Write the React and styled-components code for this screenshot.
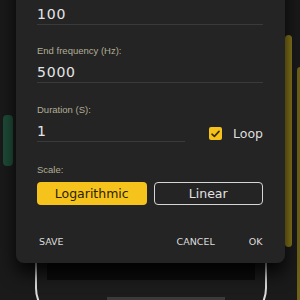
import React from 'react';
import styled, { createGlobalStyle } from 'styled-components';

const GlobalStyle = createGlobalStyle`
  html, body {
    margin: 0;
    padding: 0;
    background: #1a1a1a;
  }
`;

const Stage = styled.div`
  position: relative;
  width: 300px;
  height: 300px;
  overflow: hidden;
  background: #1a1a1a;
`;

const Bar = styled.div`
  position: absolute;
  left: ${p => p.x}px;
  top: ${p => p.y}px;
  width: ${p => p.w}px;
  height: ${p => p.h}px;
  background: ${p => p.color};
  border-radius: 4px;
`;

const Device = styled.div`
  position: absolute;
  left: 35px;
  top: 190px;
  width: 228px;
  height: 128px;
  border: 2px solid #dcdcdc;
  border-radius: 34px;
  background: #1c1c1c;
`;

const DeviceScreen = styled.div`
  position: absolute;
  left: 10px;
  right: 10px;
  top: 0;
  height: 88px;
  background: #0c0c0c;
`;

const DeviceStrip = styled.div`
  position: absolute;
  left: 70px;
  right: 40px;
  bottom: 20px;
  height: 3px;
  background: #3a3a3a;
`;

const Dialog = styled.div`
  position: absolute;
  left: 16px;
  top: -33px;
  width: 269px;
  box-sizing: border-box;
  padding: 38px 22px 15px 21px;
  background: #242424;
  border-radius: 8px;
  box-shadow: 0 10px 18px rgba(0, 0, 0, 0.85);
  display: flex;
  flex-direction: column;
`;

const Field = styled.div`
  display: flex;
  flex-direction: column;
  margin-top: ${p => p.gap || 0}px;
  width: ${p => (p.w ? `${p.w}px` : 'auto')};
`;

const Label = styled.div`
  font-family: "Liberation Sans", Arial, sans-serif;
  font-size: 9.5px;
  line-height: 12px;
  color: #b2ae96;
  margin-bottom: ${p => p.mb ?? 6}px;
  margin-top: ${p => p.mt || 0}px;
`;

const Value = styled.div`
  font-family: "DejaVu Sans", sans-serif;
  font-size: 14px;
  line-height: 18px;
  letter-spacing: 0.8px;
  color: #e6e6e6;
  padding-bottom: 1px;
  border-bottom: 1px solid #3a3a3a;
`;

const Row = styled.div`
  display: flex;
  align-items: flex-end;
  margin-top: ${p => p.gap || 0}px;
`;

const LoopToggle = styled.label`
  display: flex;
  align-items: center;
  gap: 11px;
  margin-left: 24px;
  margin-bottom: 1px;
  font-family: "DejaVu Sans", sans-serif;
  font-size: 12.5px;
  line-height: 15px;
  color: #dedede;
`;

const Check = styled.span`
  width: 13px;
  height: 13px;
  border-radius: 2px;
  background: #f5c21b;
  display: flex;
  align-items: center;
  justify-content: center;
`;

const ScaleButtons = styled.div`
  display: grid;
  grid-template-columns: 1fr 1fr;
  gap: 7px;
`;

const ScaleButton = styled.button`
  height: 23px;
  box-sizing: border-box;
  border-radius: 4px;
  font-family: "DejaVu Sans", sans-serif;
  font-size: 12.5px;
  line-height: 15px;
  padding: 0;
  cursor: pointer;
  background: ${p => (p.active ? '#f6c31c' : 'transparent')};
  color: ${p => (p.active ? '#2b2300' : '#e2e2e2')};
  border: ${p => (p.active ? 'none' : '1.5px solid #d6d6d6')};
`;

const Actions = styled.div`
  display: flex;
  align-items: center;
  margin-top: 31px;
`;

const TextButton = styled.button`
  background: none;
  border: none;
  padding: 0;
  font-family: "DejaVu Sans", sans-serif;
  font-size: 9.5px;
  line-height: 12px;
  color: #dcdcdc;
  margin-left: ${p => p.ml || 0}px;
  margin-right: ${p => p.mr || 0}px;
`;

export default function App() {
  return (
    <Stage>
      <GlobalStyle />
      <Bar x={3} y={115} w={10} h={51} color="#1e4b38" />
      <Bar x={285} y={35} w={7} h={212} color="#8a7a1d" />
      <Bar x={297} y={67} w={7} h={240} color="#6e6218" />
      <Device>
        <DeviceScreen />
        <DeviceStrip />
      </Device>

      <Dialog>
        <Field>
          <Value>100</Value>
        </Field>
        <Field gap={20}>
          <Label>End frequency (Hz):</Label>
          <Value>5000</Value>
        </Field>
        <Row gap={21}>
          <Field w={151}>
            <Label>Duration (S):</Label>
            <Value>1</Value>
          </Field>
          <LoopToggle>
            <Check>
              <svg width="9" height="8" viewBox="0 0 9 8">
                <path d="M1 4.2 L3.4 6.4 L8 1.4" fill="none" stroke="#3a2c00" strokeWidth="1.6" strokeLinecap="round" strokeLinejoin="round" />
              </svg>
            </Check>
            Loop
          </LoopToggle>
        </Row>
        <Label mt={22}>Scale:</Label>
        <ScaleButtons>
          <ScaleButton active>Logarithmic</ScaleButton>
          <ScaleButton>Linear</ScaleButton>
        </ScaleButtons>
        <Actions>
          <TextButton ml={2}>SAVE</TextButton>
          <TextButton ml={113}>CANCEL</TextButton>
          <TextButton ml={34}>OK</TextButton>
        </Actions>
      </Dialog>
    </Stage>
  );
}
